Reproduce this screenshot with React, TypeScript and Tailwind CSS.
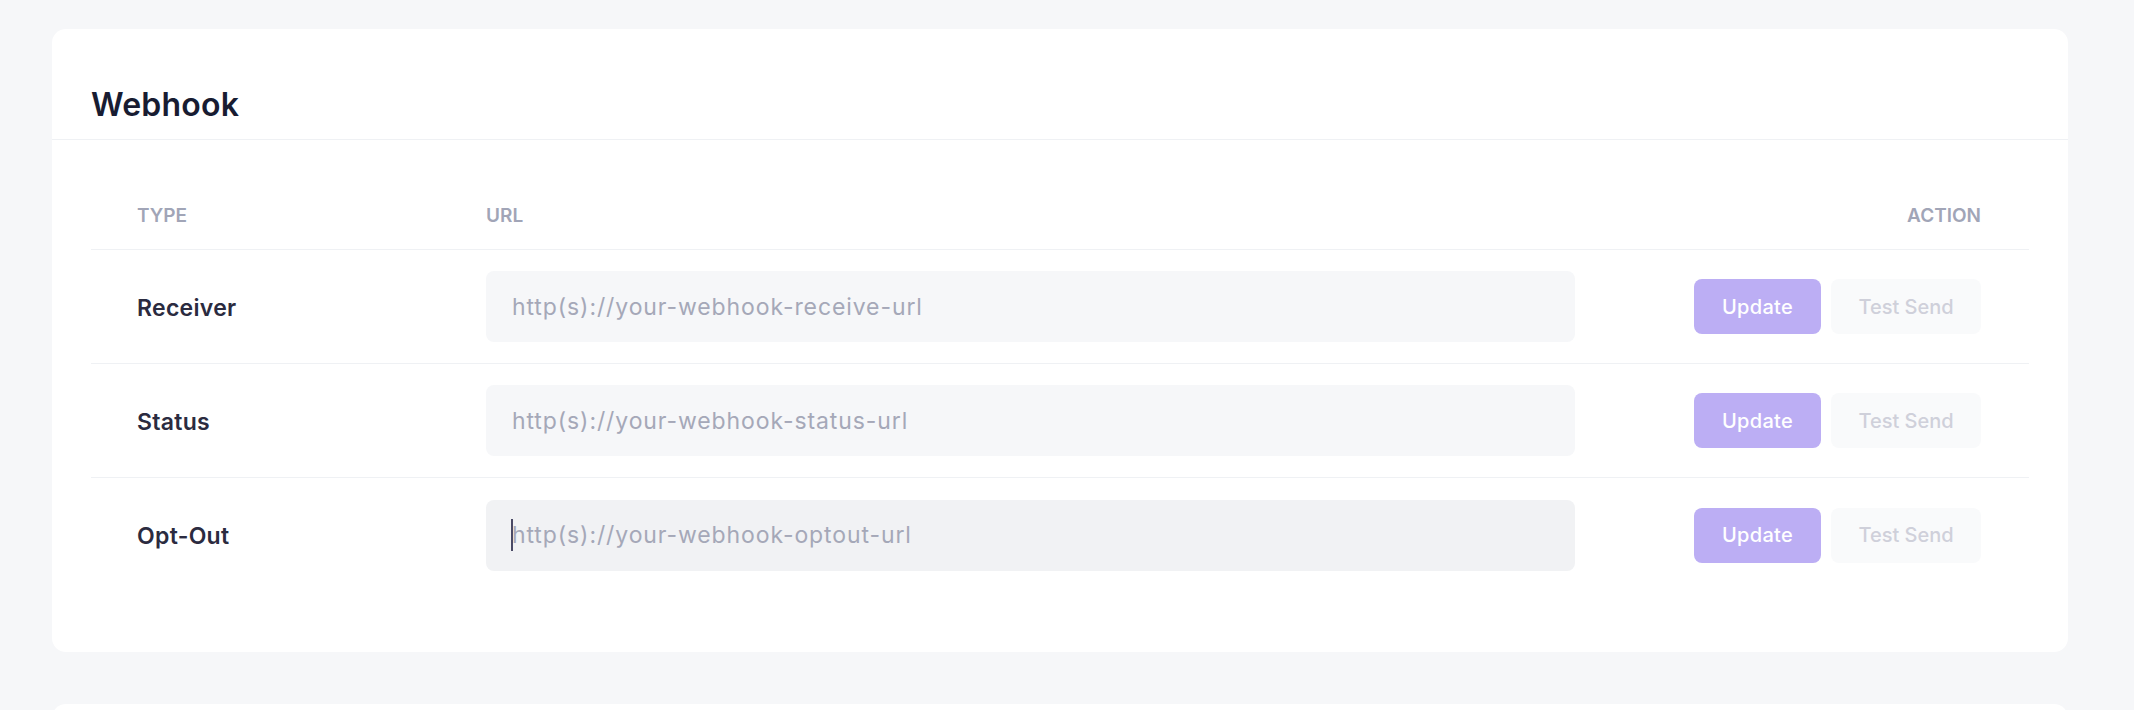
import { useState } from "react";

const rows = [
  { id: "receiver", label: "Receiver", placeholder: "http(s)://your-webhook-receive-url" },
  { id: "status", label: "Status", placeholder: "http(s)://your-webhook-status-url" },
  { id: "optout", label: "Opt-Out", placeholder: "http(s)://your-webhook-optout-url", focused: true },
];

function WebhookRow({
  label,
  placeholder,
  focused,
  last,
}: {
  label: string;
  placeholder: string;
  focused?: boolean;
  last?: boolean;
}) {
  const [value, setValue] = useState("");

  return (
    <div
      className={`grid grid-cols-[395px_1089px_1fr] items-center h-[114px] ${
        last ? "" : "border-b border-[#eff1f4]"
      }`}
    >
      <div className="pl-[46px] pt-[2px]">
        <p className="font-semibold text-[23px] leading-[30px] tracking-[0.3px] text-[#2b2b40]">{label}</p>
      </div>
      <div className="relative">
        <input
          value={value}
          onChange={(e) => setValue(e.target.value)}
          placeholder={placeholder}
          className={`w-full h-[71px] rounded-[8px] pl-[26px] pr-4 text-[23px] tracking-[0.9px] text-[#3f4254] placeholder:text-[#a5a8b8] outline-none ${
            focused ? "bg-[#f1f2f4]" : "bg-[#f6f7f9]"
          }`}
        />
        {focused && value === "" && (
          <span className="absolute left-[25px] top-[19px] w-[2px] h-[32px] bg-[#4a4a66]" />
        )}
      </div>
      <div className="flex items-center justify-end gap-[10px] pr-[48px]">
        <button className="h-[55px] w-[127px] rounded-[8px] bg-[#bcaef4] text-white font-medium text-[20px] tracking-[0.3px]">
          Update
        </button>
        <button className="h-[55px] w-[150px] rounded-[8px] bg-[#f9fafb] text-[#cfd0da] font-medium text-[20px]">
          Test Send
        </button>
      </div>
    </div>
  );
}

export default function App() {
  return (
    <div className="min-h-screen bg-[#f6f7f9] pt-[29px] pl-[52px] pr-[66px] font-['Inter',sans-serif]">
      <div className="bg-white rounded-[14px]">
        {/* Header */}
        <div className="h-[111px] flex items-end pb-[14px] px-[39px] border-b border-[#eff1f4]">
          <h2 className="font-semibold text-[32px] leading-[40px] text-[#181c32] tracking-[0.2px]">Webhook</h2>
        </div>

        {/* Table */}
        <div className="px-[39px] pt-[40px] pb-[60px]">
          <div className="grid grid-cols-[395px_1089px_1fr] items-center h-[70px] border-b border-[#eff1f4] pt-[3px]">
            <p className="pl-[46px] font-semibold text-[19px] uppercase text-[#a1a5b7]">Type</p>
            <p className="font-semibold text-[19px] uppercase text-[#a1a5b7]">URL</p>
            <p className="pr-[48px] text-right font-semibold text-[19px] uppercase text-[#a1a5b7]">Action</p>
          </div>
          {rows.map((row, i) => (
            <WebhookRow
              key={row.id}
              label={row.label}
              placeholder={row.placeholder}
              focused={row.focused}
              last={i === rows.length - 1}
            />
          ))}
        </div>
      </div>

      <div className="bg-white rounded-[14px] mt-[52px] h-[120px]" />
    </div>
  );
}
